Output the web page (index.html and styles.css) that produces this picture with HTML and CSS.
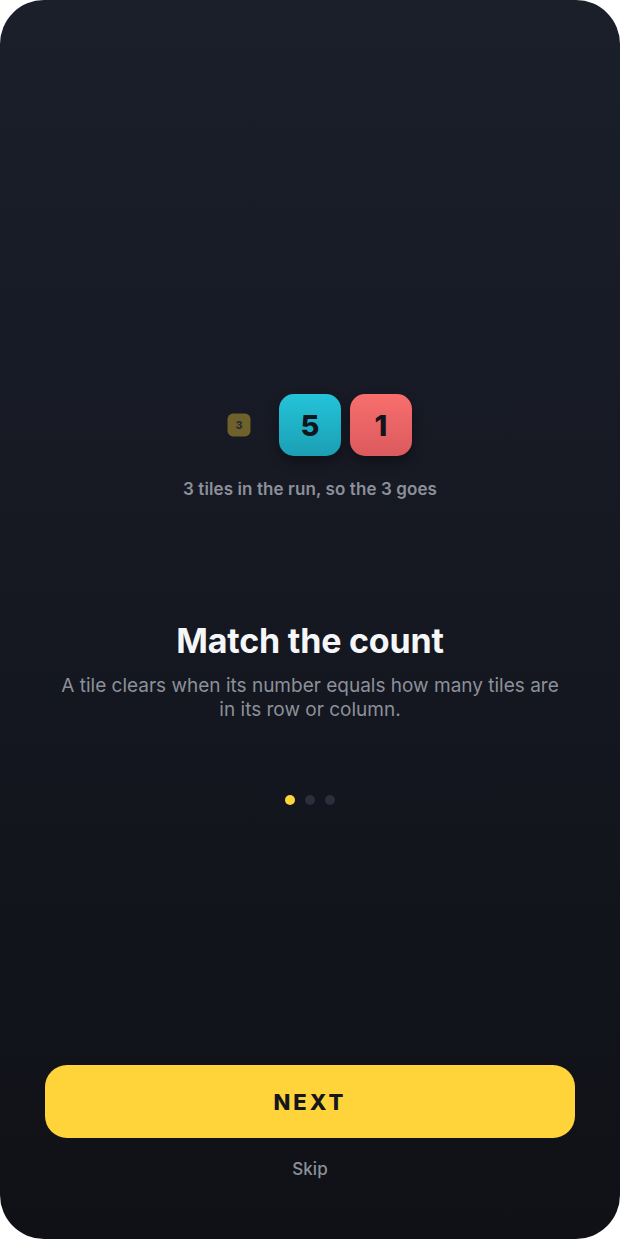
FILE: index.html
```html
<!DOCTYPE html>
<html lang="en">
<head>
<meta charset="utf-8">
<title>Match the count</title>
<link rel="stylesheet" href="styles.css">
</head>
<body>
<div class="phone">
  <main class="content">
    <section class="demo">
      <div class="tiles">
        <div class="slot"><div class="tile tile-yellow gone">3</div></div>
        <div class="slot"><div class="tile tile-cyan">5</div></div>
        <div class="slot"><div class="tile tile-red">1</div></div>
      </div>
      <p class="caption">3 tiles in the run, so the 3 goes</p>
    </section>
    <section class="copy">
      <h1 class="title">Match the count</h1>
      <p class="desc">A tile clears when its number equals how many tiles are in its row or column.</p>
    </section>
    <div class="dots">
      <span class="dot active"></span>
      <span class="dot"></span>
      <span class="dot"></span>
    </div>
  </main>
  <footer class="actions">
    <button class="next">NEXT</button>
    <button class="skip">Skip</button>
  </footer>
</div>
</body>
</html>
```
FILE: styles.css
```css
* { box-sizing: border-box; }
html, body {
  margin: 0;
  padding: 0;
  background: #ffffff;
}
body {
  width: 620px;
  height: 1239px;
  font-family: Inter, "Noto Sans", sans-serif;
}
.phone {
  width: 620px;
  height: 1239px;
  border-radius: 44px;
  overflow: hidden;
  background: linear-gradient(180deg, #1b1f2a 0%, #151821 50%, #0f1116 100%);
  display: flex;
  flex-direction: column;
}
.content {
  flex: 1;
  display: flex;
  flex-direction: column;
  align-items: center;
  padding-top: 394px;
}
.demo {
  display: flex;
  flex-direction: column;
  align-items: center;
}
.tiles {
  display: flex;
  gap: 9px;
}
.slot {
  width: 62px;
  height: 62px;
  display: flex;
  align-items: center;
  justify-content: center;
}
.tile {
  width: 62px;
  height: 62px;
  border-radius: 15px;
  display: flex;
  align-items: center;
  justify-content: center;
  font-family: Inter, sans-serif;
  font-weight: 800;
  font-size: 29px;
  color: #12151b;
  box-shadow: 0 6px 12px rgba(0, 0, 0, 0.35);
}
.tile-cyan {
  background: linear-gradient(180deg, #24c4d9 0%, #1b9fb4 100%);
}
.tile-red {
  background: linear-gradient(180deg, #f86e6d 0%, #db5a5e 100%);
}
.tile-yellow {
  background: #ffd43b;
  color: #4a4a4a;
}
.gone {
  transform: scale(0.37);
  opacity: 0.38;
  box-shadow: none;
}
.caption {
  margin: 23px 0 0;
  font-size: 17px;
  font-weight: 600;
  color: #8c909a;
  line-height: 20px;
  letter-spacing: 0.1px;
}
.copy {
  margin-top: 122px;
  display: flex;
  flex-direction: column;
  align-items: center;
  text-align: center;
}
.title {
  margin: 0;
  font-size: 34px;
  font-weight: 700;
  color: #f5f6f8;
  line-height: 40px;
  letter-spacing: -0.2px;
}
.desc {
  margin: 13px 0 0;
  width: 510px;
  font-size: 19px;
  line-height: 24px;
  color: #8c909a;
}
.dots {
  margin-top: 73px;
  display: flex;
  gap: 10px;
}
.dot {
  width: 10px;
  height: 10px;
  border-radius: 50%;
  background: #2b2f3b;
}
.dot.active {
  background: #ffd43b;
}
.actions {
  display: flex;
  flex-direction: column;
  align-items: center;
  padding: 0 45px 58px;
}
.next {
  width: 530px;
  height: 73px;
  border: none;
  border-radius: 22px;
  background: #ffd43b;
  color: #15171c;
  font-family: Inter, sans-serif;
  font-weight: 800;
  font-size: 22px;
  letter-spacing: 3px;
  cursor: pointer;
}
.skip {
  margin-top: 19px;
  border: none;
  background: none;
  padding: 0;
  font-family: Inter, sans-serif;
  font-size: 17px;
  font-weight: 500;
  color: #8c909a;
  line-height: 24px;
}
```
